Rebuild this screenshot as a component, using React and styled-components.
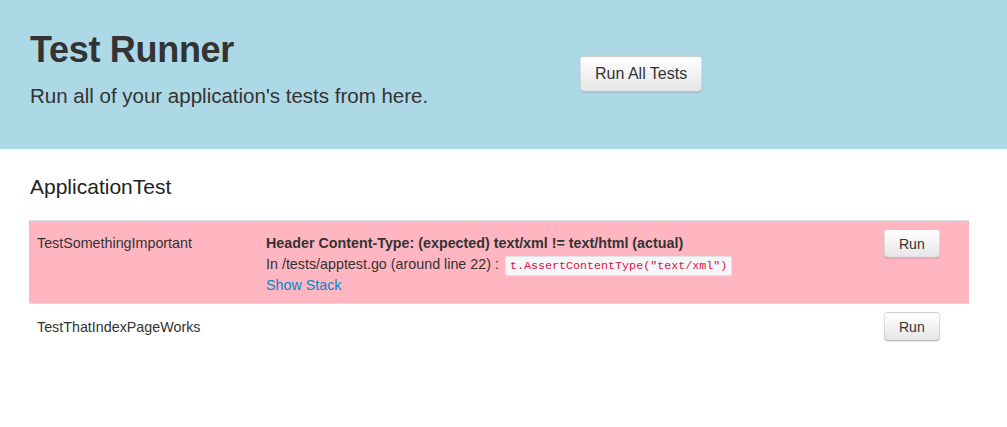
import React from 'react';
import styled, { createGlobalStyle } from 'styled-components';

const GlobalStyle = createGlobalStyle`
    body {
        margin: 0;
        font-family: "Liberation Sans", Arial, sans-serif;
        font-size: 14px;
        line-height: 20px;
        color: #333;
        background: #fff;
    }
`;

const Hero = styled.header`
    background-color: #add8e6;
    height: 149px;
    box-sizing: border-box;
    padding: 30px 29px 0 30px;
    display: grid;
    grid-template-columns: 550px auto;
    align-items: start;
`;

const Title = styled.h1`
    margin: 0;
    font-size: 36px;
    line-height: 40px;
    font-weight: bold;
    color: #333;
    letter-spacing: -0.3px;
`;

const Lead = styled.p`
    margin: 12px 0 0;
    font-size: 20.5px;
    line-height: 28px;
    font-weight: 300;
`;

const Button = styled.button`
    font-family: inherit;
    font-size: ${p => (p.large ? '16px' : '14px')};
    line-height: ${p => (p.large ? '22px' : '20px')};
    padding: ${p => (p.large ? '6px 14px' : '4px 14px 3px')};
    color: #333;
    background-color: #f5f5f5;
    background-image: linear-gradient(to bottom, #ffffff, #e6e6e6);
    border: 1px solid #cccccc;
    border-color: rgba(0, 0, 0, 0.1) rgba(0, 0, 0, 0.1) rgba(0, 0, 0, 0.25);
    border-radius: 4px;
    box-shadow: inset 0 1px 0 rgba(255, 255, 255, 0.2), 0 1px 2px rgba(0, 0, 0, 0.1);
    cursor: pointer;
`;

const HeroAction = styled.div`
    padding-top: 26px;
`;

const Content = styled.main`
    padding: 0 38px 0 29px;
`;

const SuiteName = styled.h2`
    margin: 23px 0 18px 1px;
    font-size: 21px;
    line-height: 30px;
    font-weight: normal;
    color: #222;
`;

const Table = styled.div`
    width: 940px;
    font-size: 14.3px;
`;

const Row = styled.div`
    display: grid;
    grid-template-columns: 229px 1fr 93px;
    border-top: 1px solid #dddddd;
    background-color: ${p => (p.failed ? '#ffb6c1' : 'transparent')};
    min-height: ${p => (p.failed ? '82px' : '46px')};
`;

const Cell = styled.div`
    padding: ${p => (p.failed ? '12px 8px 6px' : '13px 8px 6px')};
`;

const ButtonCell = styled.div`
    padding: 8px 8px;
`;

const ErrorTitle = styled.div`
    font-weight: bold;
    line-height: 21px;
`;

const ErrorLine = styled.div`
    line-height: 21px;
    height: 21px;
`;

const Code = styled.code`
    font-family: "Liberation Mono", Menlo, monospace;
    font-size: 11.7px;
    color: #dd1144;
    background-color: #f7f7f9;
    border: 1px solid #e1e1e8;
    border-radius: 3px;
    padding: 2px 4px;
    margin-left: 2px;
`;

const StackLink = styled.a`
    display: block;
    color: #0088cc;
    text-decoration: none;
    line-height: 21px;
`;

const tests = [
    {
        name: 'TestSomethingImportant',
        error: {
            summary: 'Header Content-Type: (expected) text/xml != text/html (actual)',
            path: '/tests/apptest.go',
            line: 22,
            source: 't.AssertContentType("text/xml")'
        }
    },
    { name: 'TestThatIndexPageWorks' }
];

const App = () => {
    return (
        <>
            <GlobalStyle />
            <Hero>
                <div>
                    <Title>Test Runner</Title>
                    <Lead>Run all of your application's tests from here.</Lead>
                </div>
                <HeroAction>
                    <Button large>Run All Tests</Button>
                </HeroAction>
            </Hero>
            <Content>
                <SuiteName>ApplicationTest</SuiteName>
                <Table>
                    {tests.map(test => (
                        <Row key={test.name} failed={test.error ? 1 : 0}>
                            <Cell failed={test.error ? 1 : 0}>{test.name}</Cell>
                            <Cell failed={test.error ? 1 : 0}>
                                {test.error && (
                                    <>
                                        <ErrorTitle>{test.error.summary}</ErrorTitle>
                                        <ErrorLine>
                                            In {test.error.path} (around line {test.error.line}) :{' '}
                                            <Code>{test.error.source}</Code>
                                        </ErrorLine>
                                        <StackLink href="#">Show Stack</StackLink>
                                    </>
                                )}
                            </Cell>
                            <ButtonCell>
                                <Button>Run</Button>
                            </ButtonCell>
                        </Row>
                    ))}
                </Table>
            </Content>
        </>
    );
};

export default App;
